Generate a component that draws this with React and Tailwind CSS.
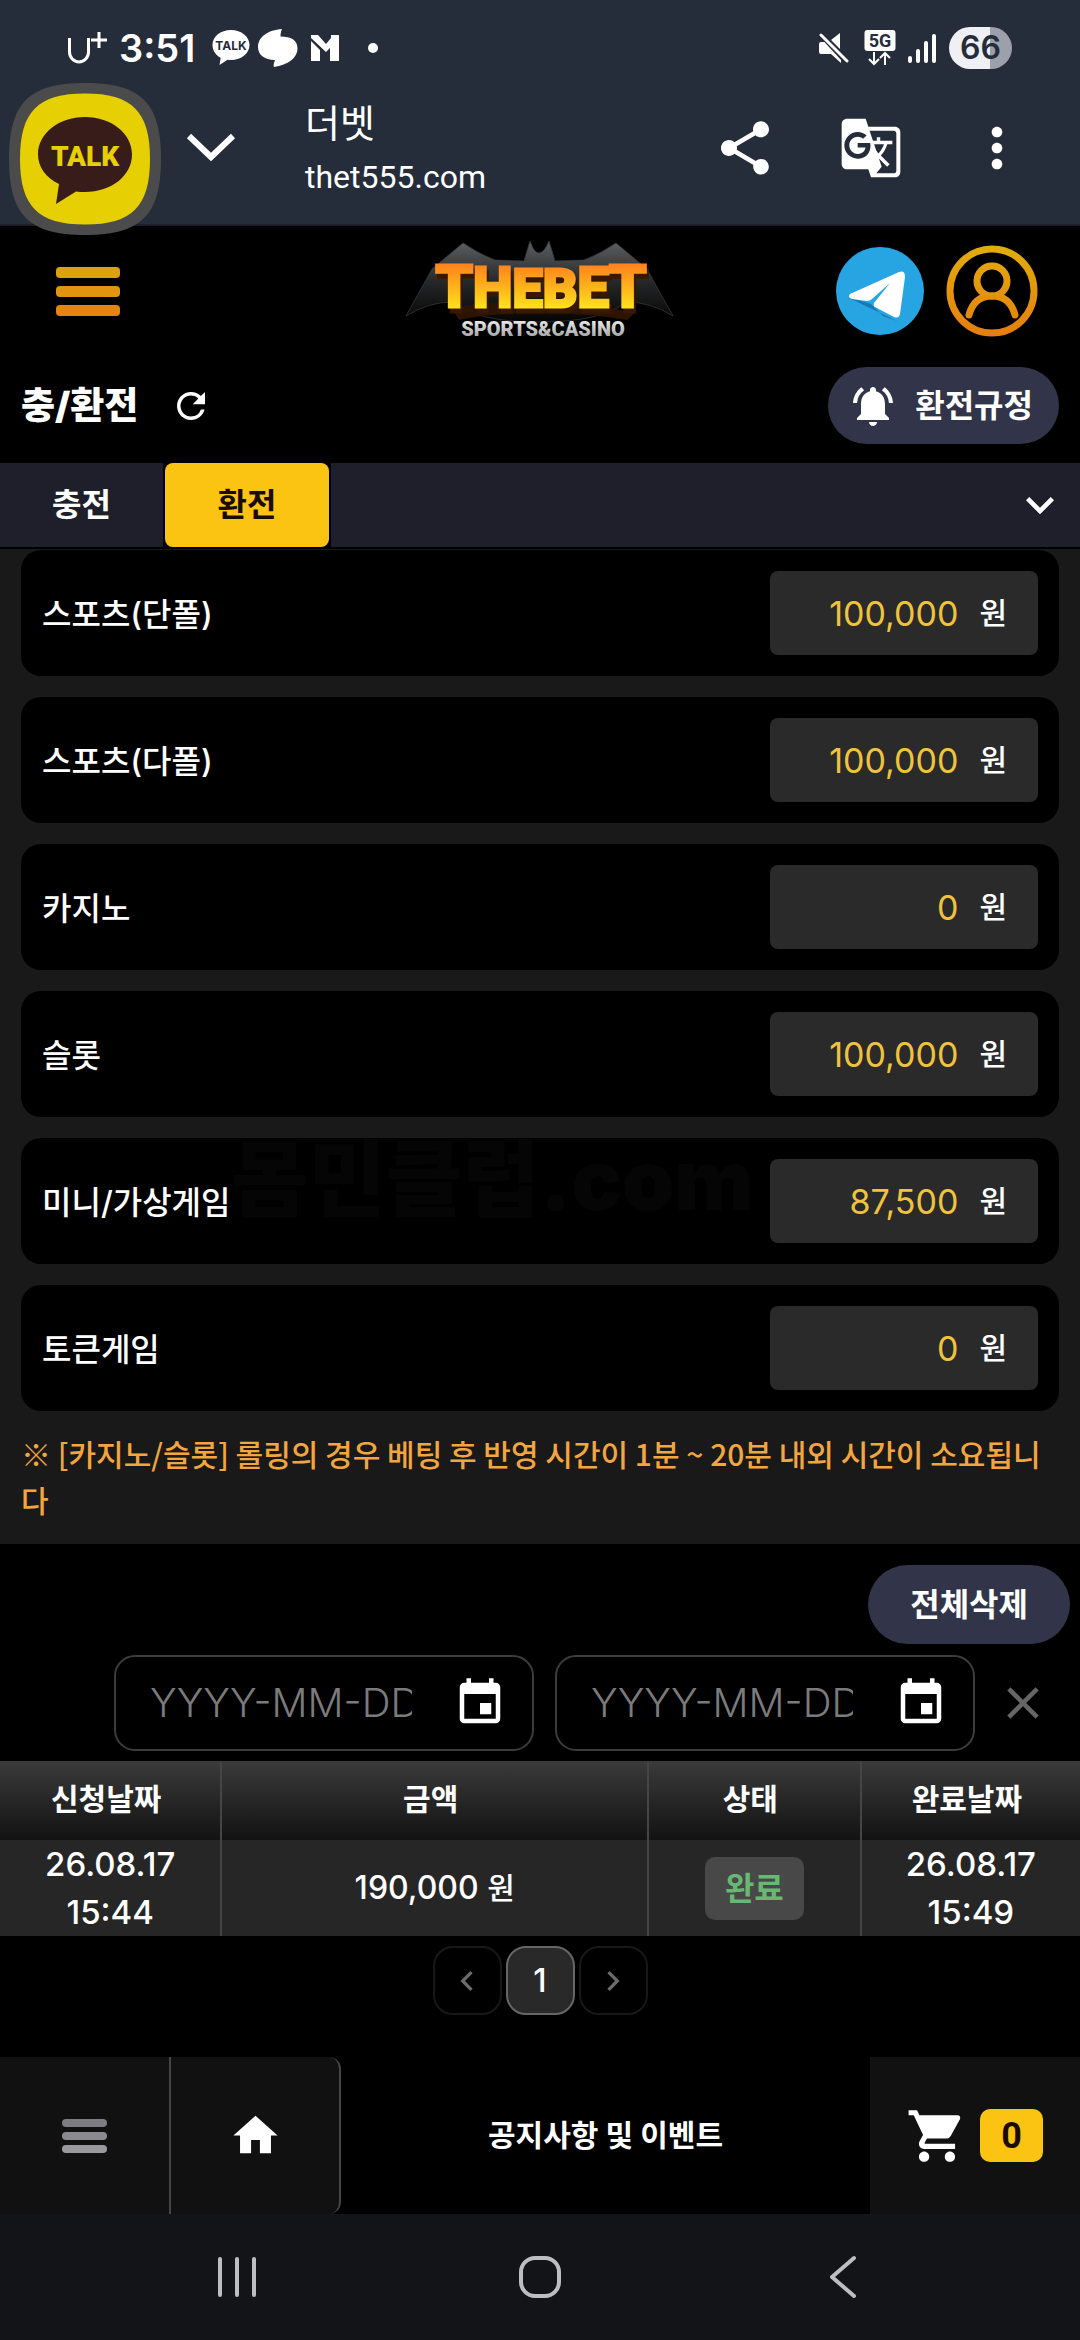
import React from "react";
import {
  MdChevronLeft,
  MdChevronRight,
  MdClose,
  MdEvent,
  MdExpandMore,
  MdGTranslate,
  MdHome,
  MdMoreVert,
  MdNotificationsActive,
  MdRefresh,
  MdShare,
  MdShoppingCart,
} from "react-icons/md";

const balances = [
  { id: "sports-single", label: "스포츠(단폴)", value: "100,000" },
  { id: "sports-multi", label: "스포츠(다폴)", value: "100,000" },
  { id: "casino", label: "카지노", value: "0" },
  { id: "slot", label: "슬롯", value: "100,000" },
  { id: "mini", label: "미니/가상게임", value: "87,500", watermark: true },
  { id: "token", label: "토큰게임", value: "0" },
];

function StatusBar() {
  return (
    <div className="flex h-24 items-center justify-between pl-[67px] pr-[68px] text-white">
      <div className="flex items-center">
        <svg className="h-10 w-10" viewBox="0 0 40 40" fill="none" stroke="currentColor" strokeWidth="3">
          <path d="M2.500 10V24a9.500 10 0 0 0 19 0V10" />
          <path d="M24 12H40M32 4V20" />
        </svg>
        <span className="ml-3 w-[74px] text-[38px] font-semibold leading-none">3:51</span>
        <svg className="ml-[19px] h-9 w-[38px]" viewBox="0 0 38 36">
          <path
            fill="currentColor"
            d="M19 0C8.500 0 .5 6.500.5 15c0 5.500 3.200 10 8.200 12.800L7.500 35l8-5.200c1.200.2 2.300.2 3.500.2 10.500 0 18.500-6.700 18.500-15S29.500 0 19 0z"
          />
          <text x="19" y="20" textAnchor="middle" fill="#262d3a" fontSize="12" fontWeight="700">
            TALK
          </text>
        </svg>
        <svg className="ml-2 h-[38px] w-10" viewBox="0 0 40 38" fill="currentColor">
          <path d="M24 0C10 1 0 8 0 18c0 8 6 12.500 17 13-1 3-2 5-1 7C30 36 39.500 29 39.500 19.500 39.500 11 33 7.500 22.500 7.500 22.500 4.500 23 2 24 0z" />
        </svg>
        <svg className="ml-3 h-[26px] w-[30px]" viewBox="0 0 30 26" fill="currentColor">
          <path d="M1 0h7l8 9 5-6V0h8v26h-9V13l-4 4L1 3z" />
          <path d="M1 6l9 9v11H1z" />
        </svg>
        <span className="ml-7 size-[10px] rounded-full bg-white" />
      </div>

      <div className="flex items-center">
        <svg className="h-[30px] w-[31px]" viewBox="0 0 31 30" fill="currentColor">
          <path d="M1 11q0-2 2-2h5l15 15v6l-10-9H3q-2 0-2-2zM13 7l9-7v16z" />
          <path d="M3 1l26 28" stroke="#262d3a" strokeWidth="6" />
          <path d="M3 2l26 26" stroke="currentColor" strokeWidth="3" strokeLinecap="round" />
        </svg>
        <svg className="ml-[15px] h-9 w-8" viewBox="0 0 32 36" fill="none">
          <rect x="0.500" y="0" width="31" height="21" rx="3" fill="currentColor" />
          <text x="16" y="17" textAnchor="middle" fill="#262d3a" fontSize="18" fontWeight="700" fontFamily="Roboto">
            5G
          </text>
          <path d="M10 22v12M5 29l5 5 5-5M21 35V23M16 28l5-5 5 5" stroke="currentColor" strokeWidth="2" />
        </svg>
        <svg className="ml-[11px] h-[30px] w-[30px]" viewBox="0 0 30 30" stroke="currentColor" strokeWidth="4" strokeLinecap="round">
          <path d="M3 25v3M11 18v10M19 10v18M27 3v25" />
        </svg>
        <span className="ml-3 flex h-[42px] w-[63px] items-center justify-center rounded-full bg-linear-to-r from-[#eef0f5] from-65% to-[#9ca0aa] to-65% text-[32px] font-semibold leading-none text-[#262d3a]">
          66
        </span>
      </div>
    </div>
  );
}

function BrowserBar() {
  return (
    <div className="flex h-[128px] items-center pb-6 pl-[184px] pr-[51px] text-white">
      <button type="button" aria-label="닫기" className="flex w-[54px] justify-center">
        <svg className="h-8 w-[50px]" viewBox="0 0 50 32" fill="none" stroke="currentColor" strokeWidth="6">
          <path d="M3 4l22 21L47 4" />
        </svg>
      </button>
      <div className="ml-[67px] flex-1 pt-1">
        <div className="text-[38px] leading-[54px]">더벳</div>
        <div className="font-['Roboto','Noto_Sans_CJK_KR',sans-serif] text-[32px] leading-[54px]">thet555.com</div>
      </div>
      <div className="flex gap-[62px]">
        <button type="button" aria-label="공유">
          <MdShare className="size-16" />
        </button>
        <button type="button" aria-label="번역">
          <MdGTranslate className="size-16" />
        </button>
        <button type="button" aria-label="더보기">
          <MdMoreVert className="size-16" />
        </button>
      </div>
    </div>
  );
}

function TalkBubble() {
  return (
    <button type="button" aria-label="TALK" className="absolute left-[9px] top-[83px] z-10">
      <svg className="size-[152px]" viewBox="0 0 152 152">
        <path
          fill="#4b4b4c"
          d="M76 0c56 0 76 20 76 76s-20 76-76 76S0 132 0 76 20 0 76 0z"
        />
        <path
          fill="#e6d003"
          d="M76 10.500c47 0 65 18 65 65.500s-18 65.500-65 65.500S11 123.500 11 76s18-65.500 65-65.500z"
        />
        <path
          fill="#371c1a"
          d="M76 34c26.500 0 47 16.500 47 37.500S102.500 109 76 109c-3 0-6-.2-9-.6L47 121l3-20C37 95 29 84 29 71.500 29 50.500 49.500 34 76 34z"
        />
        <text x="76" y="83" textAnchor="middle" fill="#e6d003" fontSize="28" fontWeight="900" fontFamily="Roboto">
          TALK
        </text>
      </svg>
    </button>
  );
}

function Logo() {
  return (
    <svg className="h-[100px] w-[270px]" viewBox="0 0 270 100" role="img" aria-label="THEBET SPORTS&CASINO">
      <defs>
        <linearGradient id="fire" gradientUnits="userSpaceOnUse" x1="0" y1="19" x2="0" y2="74">
          <stop offset="0" stopColor="#ff7a1c" />
          <stop offset="0.500" stopColor="#ffb31c" />
          <stop offset="1" stopColor="#fff21a" />
        </linearGradient>
        <linearGradient id="wing" x1="0" y1="0" x2="0" y2="1">
          <stop offset="0" stopColor="#5d5f61" />
          <stop offset="0.500" stopColor="#262728" />
          <stop offset="1" stopColor="#050505" />
        </linearGradient>
        <linearGradient id="silver" gradientUnits="userSpaceOnUse" x1="0" y1="78" x2="0" y2="96">
          <stop offset="0" stopColor="#f0f0f0" />
          <stop offset="1" stopColor="#a5a5a8" />
        </linearGradient>
      </defs>
      <path
        fill="url(#wing)"
        stroke="#3b3c3d"
        strokeWidth="0.700"
        d="M1 75L27 28 58 2q16 11 32 17l29 1 6-20q4 12 9 12t10-12l6 20 29-1q16-6 32-17l31 26 26 47q-22-14-47-14-24 20-87 20T48 61q-25 0-47 14z"
      />
      <path fill="#2c1400" d="M46 66l40-4h98l46 10-8 7q-40-7-88-7t-80 7z" />
      <g fontFamily="Roboto" textAnchor="middle">
        <text
          className="drop-shadow-[2px_5px_0px_#3a1800]"
          x="136"
          y="66"
          fontWeight="800"
          fill="url(#fire)"
          stroke="url(#fire)"
          strokeWidth="3"
        >
          <tspan fontSize="60">T</tspan>
          <tspan fontSize="56">H</tspan>
          <tspan fontSize="54">EB</tspan>
          <tspan fontSize="56">E</tspan>
          <tspan fontSize="60">T</tspan>
        </text>
        <text x="138" y="95" fontSize="20" fontWeight="900" fill="url(#silver)">
          SPORTS&amp;CASINO
        </text>
      </g>
    </svg>
  );
}

function SiteHeader() {
  return (
    <div className="grid h-[130px] grid-cols-[1fr_auto_1fr] items-center px-[42px]">
      <button type="button" aria-label="메뉴" className="ml-[14px] flex w-16 flex-col gap-2">
        <span className="h-[11px] rounded bg-[#dba20d]" />
        <span className="h-[11px] rounded bg-[#e0940f]" />
        <span className="h-[11px] rounded bg-[#e3860d]" />
      </button>
      <Logo />
      <div className="flex items-center justify-end gap-[22px]">
        <a href="#telegram" aria-label="텔레그램">
          <svg className="size-[88px]" viewBox="0 0 88 88">
            <circle cx="44" cy="44" r="44" fill="#27a4e2" />
            <path d="M11 50l24 7 12 12 14 5z" fill="#1877b5" />
            <path
              fill="#fff"
              d="M14 47Q11 50 16 52l15 2q3 0 5-2l18-16-16 20q-1 3 1 4l19 10q5 2 6-3l5-37q0-7-6-5z"
            />
          </svg>
        </a>
        <button type="button" aria-label="내 정보">
          <svg className="size-[92px]" viewBox="0 0 92 92" fill="none" stroke="url(#userRing)" strokeWidth="7">
            <defs>
              <linearGradient id="userRing" gradientUnits="userSpaceOnUse" x1="0" y1="0" x2="0" y2="92">
                <stop offset="0" stopColor="#e2ae0c" />
                <stop offset="1" stopColor="#e57d0e" />
              </linearGradient>
            </defs>
            <circle cx="46" cy="46" r="42" />
            <circle cx="46" cy="36" r="15" />
            <path d="M23 70q5-19 23-19t23 19" strokeLinecap="round" />
          </svg>
        </button>
      </div>
    </div>
  );
}

function TitleRow() {
  return (
    <div className="flex items-center justify-between px-[21px] pb-[19px] pt-[11px]">
      <div className="flex items-center">
        <h1 className="text-[37px] font-black leading-none">충/환전</h1>
        <button type="button" aria-label="새로고침" className="ml-8">
          <MdRefresh className="size-[42px]" />
        </button>
      </div>
      <button
        type="button"
        className="flex h-[77px] items-center gap-[18px] rounded-full bg-[#32354a] pl-[21px] pr-[26px] text-[32px] font-bold leading-none"
      >
        <MdNotificationsActive className="size-12" />
        환전규정
      </button>
    </div>
  );
}

function Tabs() {
  return (
    <div className="border-b-2 border-black">
      <div className="flex h-[84px] items-stretch bg-[#1e1f2a] text-[32px] font-bold leading-none" role="tablist">
        <button type="button" role="tab" aria-selected="false" className="w-[163px]">
          충전
        </button>
        <div className="border-x-2 border-black bg-black">
          <button type="button" role="tab" aria-selected="true" className="h-full w-[164px] rounded-lg bg-[#fcc412] text-[#1a0c00]">
            환전
          </button>
        </div>
        <button type="button" aria-label="펼치기" className="ml-auto pr-3">
          <MdExpandMore className="size-14" />
        </button>
      </div>
    </div>
  );
}

function BalanceCard({ id, label, value, watermark }) {
  return (
    <div className="relative flex items-center justify-between rounded-[20px] bg-black p-[21px]">
      {watermark && (
        <span aria-hidden="true" className="absolute left-[210px] top-0 text-[84px] font-black leading-none text-[#050505]">
          몸민클럽.com
        </span>
      )}
      <label htmlFor={id} className="pt-1 text-[32px] font-medium leading-none">
        {label}
      </label>
      <div className="relative flex h-[84px] w-[268px] items-center gap-[21px] rounded-lg bg-[#2a2a2a] pr-[31px]">
        <input
          id={id}
          type="text"
          readOnly
          value={value}
          className="min-w-0 flex-1 bg-transparent text-right text-[34px] text-[#f0c33c] outline-none"
        />
        <span className="text-[30px] font-medium leading-none">원</span>
      </div>
    </div>
  );
}

function DateField({ label }) {
  return (
    <div className="flex h-24 w-[420px] items-center rounded-[21px] border-2 border-[#3c3c3c] pl-[34px] pr-[25px]">
      <input
        type="text"
        aria-label={label}
        placeholder="YYYY-MM-DD"
        className="w-[262px] bg-transparent text-[40px] font-light outline-none placeholder:text-[#7b7b7b]"
      />
      <button type="button" aria-label={`${label} 선택`} className="ml-auto">
        <MdEvent className="size-[54px]" />
      </button>
    </div>
  );
}

function History() {
  const th = "border-r-2 border-[#454545] pb-1 pr-2 text-[30px] font-bold last:border-r-0";
  const td = "border-r-2 border-[#454545] p-0 last:border-r-0";
  return (
    <table className="w-full table-fixed border-collapse text-center leading-[48px]">
      <colgroup>
        <col className="w-[20.5%]" />
        <col className="w-[39.5%]" />
        <col className="w-[19.7%]" />
        <col />
      </colgroup>
      <thead>
        <tr className="h-[79px] bg-linear-to-b from-[#3b3b3b] to-[#131313]">
          <th className={th}>신청날짜</th>
          <th className={th}>금액</th>
          <th className={th}>상태</th>
          <th className={th}>완료날짜</th>
        </tr>
      </thead>
      <tbody>
        <tr className="bg-[#262626] text-[33px] font-medium">
          <td className={td}>
            26.08.17
            <br />
            15:44
          </td>
          <td className={`${td} text-[32px]`}>
            190,000 <span className="text-[30px]">원</span>
          </td>
          <td className={td}>
            <span className="inline-block rounded-[10px] bg-[#484848] px-5 py-2 align-middle text-[32px] font-bold leading-[47px] text-[#68b873]">
              완료
            </span>
          </td>
          <td className={td}>
            26.08.17
            <br />
            15:49
          </td>
        </tr>
      </tbody>
    </table>
  );
}

function Pagination() {
  const box = "flex h-[69px] w-[69px] items-center justify-center rounded-[20px] border-2";
  return (
    <nav aria-label="페이지" className="flex justify-center gap-1 pb-[42px] pt-[10px]">
      <button type="button" aria-label="이전" className={`${box} border-[#181818] text-[#6b6b6b]`}>
        <MdChevronLeft className="size-10" />
      </button>
      <button type="button" aria-current="page" className={`${box} border-[#666] bg-[#292929] text-[32px] font-medium`}>
        1
      </button>
      <button type="button" aria-label="다음" className={`${box} border-[#181818] text-[#6b6b6b]`}>
        <MdChevronRight className="size-10" />
      </button>
    </nav>
  );
}

function BottomNav() {
  return (
    <nav aria-label="하단 메뉴" className="flex h-[157px] bg-black">
      <button type="button" aria-label="메뉴" className="flex w-[171px] items-center justify-center border-r-2 border-[#454545] bg-[#111]">
        <span className="flex w-[45px] flex-col gap-[5px]">
          <span className="h-2 rounded bg-[#7e7d82]" />
          <span className="h-2 rounded bg-[#8b8a8e]" />
          <span className="h-2 rounded bg-[#9a9a9c]" />
        </span>
      </button>
      <a href="#home" aria-label="홈" className="flex w-[170px] items-center justify-center rounded-r-xl border-r-2 border-[#454545] bg-[#111]">
        <MdHome className="size-[53px]" />
      </a>
      <a href="#notice" className="flex flex-1 items-center justify-center text-[30px] font-bold">
        공지사항 및 이벤트
      </a>
      <button type="button" aria-label="카트" className="flex w-[210px] items-center bg-[#111] pl-9">
        <MdShoppingCart className="size-[62px]" />
        <span className="ml-3 flex h-[53px] w-[63px] items-center justify-center rounded-[10px] bg-[#fcc412] font-['Roboto',sans-serif] text-[36px] font-bold leading-none text-[#1a0c00]">
          0
        </span>
      </button>
    </nav>
  );
}

function SystemNav() {
  return (
    <div className="grid h-[126px] grid-cols-3 items-center justify-items-center bg-[#131418] px-[85px] text-[#bdbec2]">
      <button type="button" aria-label="최근 앱">
        <svg className="h-[42px] w-10" viewBox="0 0 40 42" stroke="currentColor" strokeWidth="4" strokeLinecap="round">
          <path d="M3 3v36M20 3v36M37 3v36" />
        </svg>
      </button>
      <button type="button" aria-label="홈 화면">
        <svg className="size-[42px]" viewBox="0 0 42 42" fill="none" stroke="currentColor" strokeWidth="4">
          <rect x="2" y="2" width="38" height="38" rx="14" />
        </svg>
      </button>
      <button type="button" aria-label="뒤로">
        <svg className="h-[44px] w-7" viewBox="0 0 28 44" fill="none" stroke="currentColor" strokeWidth="4" strokeLinecap="round" strokeLinejoin="round">
          <path d="M25 3L3 22l22 19" />
        </svg>
      </button>
    </div>
  );
}

export default function App() {
  return (
    <div className="relative flex min-h-screen flex-col bg-black font-['Inter','Noto_Sans_CJK_KR',sans-serif] text-white">
      <header className="border-b-2 border-[#1a1f28] bg-[#262d3a]">
        <StatusBar />
        <BrowserBar />
      </header>
      <TalkBubble />
      <main className="flex-1">
        <SiteHeader />
        <TitleRow />
        <Tabs />
        <section className="bg-[#191919] px-[21px] pb-[22px] pt-[1px]">
          <div className="flex flex-col gap-[21px]">
            {balances.map((b) => (
              <BalanceCard key={b.id} {...b} />
            ))}
          </div>
          <p className="break-all pt-[19px] font-['Noto_Sans_CJK_KR',sans-serif] text-[30px] font-medium leading-[46px] text-[#f3a53f]">
            ※ [카지노/슬롯] 롤링의 경우 베팅 후 반영 시간이 1분 ~ 20분 내외 시간이 소요됩니다
          </p>
        </section>
        <section>
          <div className="flex justify-end px-[10px] pt-[21px]">
            <button type="button" className="h-[79px] rounded-full bg-[#32354a] px-[42px] text-[32px] font-bold">
              전체삭제
            </button>
          </div>
          <div className="flex items-center justify-end gap-[21px] pb-[10px] pr-[30px] pt-[11px]">
            <DateField label="시작 날짜" />
            <DateField label="종료 날짜" />
            <button type="button" aria-label="날짜 지우기" className="text-[#666]">
              <MdClose className="size-[54px]" />
            </button>
          </div>
          <History />
          <Pagination />
        </section>
      </main>
      <BottomNav />
      <SystemNav />
    </div>
  );
}
